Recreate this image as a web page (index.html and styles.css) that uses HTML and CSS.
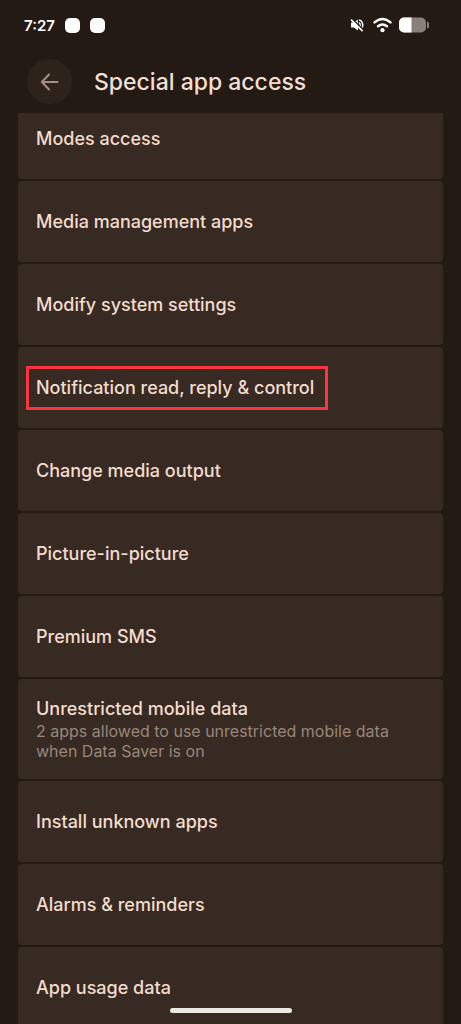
FILE: index.html
```html
<!DOCTYPE html>
<html lang="en">
  <head>
    <meta charset="UTF-8" />
    <meta name="viewport" content="width=device-width, initial-scale=1.0" />
    <title>Special app access</title>
    <link rel="stylesheet" href="styles.css">
  </head>
  <body>
    <div class="status-bar">
      <div class="status-left">
        <span class="time">7:27</span>
        <span class="notification-dot"></span>
        <span class="notification-dot"></span>
      </div>
      <div class="status-right">
        <!-- Muted -->
        <svg class="mute-icon" width="14" height="14" viewBox="0 0 16 16" fill="none">
          <path d="M1.2 5.2H4.5L9 1.8V14.2L4.5 10.8H1.2Z" fill="#fff" />
          <path d="M10.2 5.4A3 3 0 0 1 10.2 10.6M10.5 2A6.2 6.2 0 0 1 12.6 12.4" stroke="#fff" stroke-width="1.7" />
          <path d="M2.4 0.8L15.4 13.8" stroke="#231a14" stroke-width="1.7" />
          <path d="M1.2 1.8L14.4 15" stroke="#fff" stroke-width="1.8" />
        </svg>
        <!-- Wifi -->
        <svg width="19" height="16" viewBox="0 0 19 16" fill="none">
          <path d="M1.5 5.4Q9.5 -1.6 17.5 5.4" stroke="#fff" stroke-width="2.4" stroke-linecap="round" />
          <path d="M5 9.2Q9.5 5.6 14 9.2" stroke="#fff" stroke-width="2.4" stroke-linecap="round" />
          <circle cx="9.5" cy="13.2" r="2.1" fill="#fff" />
        </svg>
        <!-- Battery -->
        <svg width="31" height="16" viewBox="0 0 31 16">
          <rect x="0" y="0.5" width="27" height="15" rx="5" fill="#88807b" />
          <path d="M5 0.5H12.5V15.5H5A5 5 0 0 1 0 10.5V5.5A5 5 0 0 1 5 0.5Z" fill="#fff" />
          <path d="M28 4.8H28.5A1.5 1.5 0 0 1 30 6.3V9.7A1.5 1.5 0 0 1 28.5 11.2H28Z" fill="#88807b" />
        </svg>
      </div>
    </div>

    <header>
      <button type="button" class="back-button" aria-label="Back">
        <svg width="20" height="20" viewBox="0 0 20 20" fill="none" stroke="#a58f82" stroke-width="2" stroke-linecap="round" stroke-linejoin="round">
          <path d="M17.5 10H1.8M9 2.5L1.8 10L9 17.5" />
        </svg>
      </button>
      <h1>Special app access</h1>
    </header>

    <main>
      <nav class="settings-list">
        <a href="#" class="item"><span class="item-title">Modes access</span></a>
        <a href="#" class="item"><span class="item-title">Media management apps</span></a>
        <a href="#" class="item"><span class="item-title">Modify system settings</span></a>
        <a href="#" class="item"><span class="item-title highlighted">Notification read, reply &amp; control</span></a>
        <a href="#" class="item"><span class="item-title">Change media output</span></a>
        <a href="#" class="item"><span class="item-title">Picture-in-picture</span></a>
        <a href="#" class="item"><span class="item-title">Premium SMS</span></a>
        <a href="#" class="item">
          <span class="item-title">Unrestricted mobile data</span>
          <span class="item-summary">2 apps allowed to use unrestricted mobile data when Data Saver is on</span>
        </a>
        <a href="#" class="item"><span class="item-title">Install unknown apps</span></a>
        <a href="#" class="item"><span class="item-title">Alarms &amp; reminders</span></a>
        <a href="#" class="item"><span class="item-title">App usage data</span></a>
      </nav>
    </main>

    <div class="home-indicator"></div>
  </body>
</html>
```

FILE: styles.css
```css
* {
  box-sizing: border-box;
  margin: 0;
  padding: 0;
}

body {
  height: 100vh;
  overflow: hidden;
  display: flex;
  flex-direction: column;
  background-color: #231a14;
  color: #f3dfd2;
  font-family: "Inter", "Liberation Sans", sans-serif;
}

/* Status bar */
.status-bar {
  display: flex;
  justify-content: space-between;
  align-items: center;
  height: 50px;
  padding: 0 31px 0 24px;
  flex-shrink: 0;
}

.status-left,
.status-right {
  display: flex;
  align-items: center;
}

.status-left {
  gap: 10px;
}

.status-right {
  gap: 7px;
}

.mute-icon {
  margin-right: 2px;
}

.time {
  color: #fff;
  font-size: 15px;
  font-weight: 600;
}

.notification-dot {
  width: 15px;
  height: 15px;
  border-radius: 5px;
  background-color: #fff;
}

/* Header */
header {
  display: flex;
  align-items: center;
  gap: 22px;
  height: 63px;
  padding: 0 27px;
  flex-shrink: 0;
}

.back-button {
  display: flex;
  align-items: center;
  justify-content: center;
  width: 45px;
  height: 45px;
  border: none;
  border-radius: 50%;
  background-color: #2e231b;
  cursor: pointer;
}

h1 {
  font-size: 23px;
  font-weight: 500;
}

/* List, scrolled a little so the first row is cut by the header */
main {
  flex: 1;
  min-height: 0;
  overflow: hidden;
  padding: 0 18px;
}

.settings-list {
  display: flex;
  flex-direction: column;
  gap: 2px;
  margin-top: -15px;
}

.item {
  display: flex;
  flex-direction: column;
  align-items: flex-start;
  justify-content: center;
  min-height: 81px;
  padding: 18px;
  border-radius: 4px;
  background-color: #372a22;
  color: #f3dbcd;
  text-decoration: none;
}

.item-title {
  font-size: 18px;
  font-weight: 500;
  line-height: 24px;
}

.item-summary {
  color: #97867b;
  font-size: 16px;
  line-height: 20px;
}

.highlighted {
  position: relative;
}

.highlighted::after {
  content: "";
  position: absolute;
  inset: -10px -14px -10px -10px;
  border: 3px solid #fb3640;
}

.home-indicator {
  position: fixed;
  bottom: 11px;
  left: 50%;
  width: 122px;
  height: 5px;
  border-radius: 3px;
  background-color: #ece8e6;
  transform: translateX(-50%);
}
```
